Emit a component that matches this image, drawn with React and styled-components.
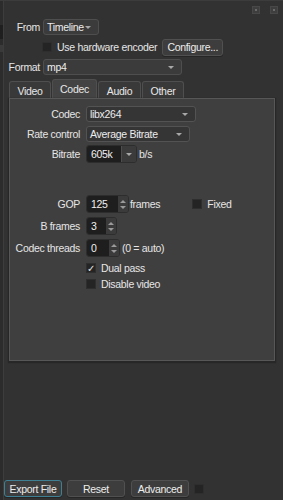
import React from 'react'
import styled, { createGlobalStyle } from 'styled-components'

const Global = createGlobalStyle`
    html, body { margin: 0; padding: 0; background: #323232; }
    body {
        font-family: "Liberation Sans", Arial, sans-serif;
        font-size: 10.5px;
        letter-spacing: -0.3px;
        color: #e6e6e6;
        white-space: nowrap;
    }
`

const Window = styled.div`
    width: 283px;
    height: 500px;
    display: flex;
    background: #323232;
    border-top: 1px solid #3c3c3c;
    box-sizing: border-box;
    overflow: hidden;
`

const SideStrip = styled.div`
    width: 3px;
    flex: none;
    background: #2c2c2c;
    border-right: 1px solid #3d3d3d;
    display: flex;
    flex-direction: column;
    padding-top: 24px;
    gap: 6px;
`

const StripBlock = styled.div`
    height: ${p => p.h}px;
    background: ${p => p.c};
`

const Main = styled.div`
    flex: 1;
    display: flex;
    flex-direction: column;
    position: relative;
`

const WinButtons = styled.div`
    position: absolute;
    top: 5px;
    right: 5px;
    display: flex;
    gap: 10px;
`

const WinButton = styled.div`
    width: 6px;
    height: 6px;
    background: #3e3e3e;
    border: 1px solid #484848;
    display: flex;
    align-items: center;
    justify-content: center;
    &::after {
        content: '';
        width: 2px;
        height: 2px;
        background: #6a6a6a;
    }
`

const Top = styled.div`
    padding: 18px 0 0 0;
    display: flex;
    flex-direction: column;
`

const Row = styled.div`
    display: flex;
    align-items: center;
    height: ${p => p.h || 16}px;
    margin-top: ${p => p.mt || 0}px;
`

const TopLabel = styled.span`
    width: 36px;
    text-align: right;
    margin-right: 3px;
    flex: none;
`

const Combo = styled.div`
    width: ${p => p.w}px;
    height: ${p => p.h || 16}px;
    box-sizing: border-box;
    background: ${p => p.inner ? '#353535' : '#3b3b3b'};
    border: 1px solid ${p => p.inner ? '#535353' : '#4e4e4e'};
    border-radius: 3px;
    display: flex;
    align-items: center;
    justify-content: space-between;
    padding: 0 7px 0 3px;
    color: #ededed;
    &::after {
        content: '';
        border-left: 3px solid transparent;
        border-right: 3px solid transparent;
        border-top: 3px solid #a8a8a8;
    }
`

const Check = styled.div`
    width: 10px;
    height: 10px;
    box-sizing: border-box;
    background: #242424;
    border: 1px solid #2e2e2e;
    flex: none;
    display: flex;
    align-items: center;
    justify-content: center;
    font-size: 10px;
    color: #e6e6e6;
    margin-right: ${p => p.mr ?? 5}px;
    margin-left: ${p => p.ml || 0}px;
`

const Button = styled.div`
    height: 17px;
    width: ${p => p.w}px;
    box-sizing: border-box;
    background: #3d3d3d;
    border: 1px solid ${p => p.focus ? '#3f7f93' : '#505050'};
    border-radius: 3px;
    display: flex;
    align-items: center;
    justify-content: center;
    color: #ededed;
    margin-left: ${p => p.ml || 0}px;
    box-shadow: 0 1px 0 #262626;
`

const Tabs = styled.div`
    display: flex;
    margin: 4px 0 0 5px;
    height: 19px;
    align-items: flex-end;
    gap: 1px;
`

const Tab = styled.div`
    width: ${p => p.w}px;
    height: ${p => p.active ? 19 : 17}px;
    box-sizing: border-box;
    background: ${p => p.active ? '#434343' : '#393939'};
    border: 1px solid #4f4f4f;
    border-bottom: none;
    border-radius: 3px 3px 0 0;
    display: flex;
    align-items: center;
    justify-content: center;
    color: #e8e8e8;
    padding-top: ${p => p.active ? 0 : 1}px;
`

const Panel = styled.div`
    margin-left: 5px;
    width: 266px;
    height: 263px;
    box-sizing: border-box;
    background: #3f3f3f;
    border: 1px solid #575757;
    box-shadow: 0 1px 1px 1px #272727;
    padding-top: 7px;
    display: flex;
    flex-direction: column;
`

const FormRow = styled.div`
    display: flex;
    align-items: center;
    height: ${p => p.h || 16}px;
    margin-top: ${p => p.mt || 0}px;
`

const FormLabel = styled.span`
    width: 70px;
    text-align: right;
    margin-right: 6px;
    flex: none;
`

const Field = styled.div`
    height: 18px;
    display: flex;
    box-sizing: border-box;
    border-radius: 3px;
    overflow: hidden;
    border: 1px solid #2d2d2d;
`

const FieldText = styled.div`
    width: ${p => p.w}px;
    background: #1e1e1e;
    display: flex;
    align-items: center;
    padding-left: 4px;
    box-sizing: border-box;
    color: #f0f0f0;
`

const DropPart = styled.div`
    width: 14px;
    background: #3b3b3b;
    border-left: 1px solid #4e4e4e;
    display: flex;
    align-items: center;
    justify-content: center;
    &::after {
        content: '';
        border-left: 3px solid transparent;
        border-right: 3px solid transparent;
        border-top: 3px solid #a8a8a8;
    }
`

const SpinPart = styled.div`
    width: 10px;
    background: #3b3b3b;
    display: flex;
    flex-direction: column;
    align-items: center;
    justify-content: center;
    gap: 3px;
`

const Arrow = styled.span`
    border-left: 3px solid transparent;
    border-right: 3px solid transparent;
    ${p => p.up ? 'border-bottom: 3px solid #9a9a9a;' : 'border-top: 3px solid #9a9a9a;'}
`

const Suffix = styled.span`
    margin-left: ${p => p.ml || 2}px;
`

const Spacer = styled.div`
    flex: 1;
`

const Footer = styled.div`
    display: flex;
    align-items: center;
    margin: 0 0 3px 0;
    height: 17px;
`

const Spin = ({ value, w }) => (
    <Field>
        <FieldText w={w}>{value}</FieldText>
        <SpinPart><Arrow up /><Arrow /></SpinPart>
    </Field>
)

const App = () => (
    <Window>
        <Global />
        <SideStrip>
            <StripBlock h={14} c="#1f1f1f" />
            <StripBlock h={7} c="#3a3a3a" />
        </SideStrip>
        <Main>
            <WinButtons>
                <WinButton />
                <WinButton />
            </WinButtons>
            <Top>
                <Row>
                    <TopLabel>From</TopLabel>
                    <Combo w={56}>Timeline</Combo>
                </Row>
                <Row mt={4} h={16}>
                    <Check ml={38} />
                    <span>Use hardware encoder</span>
                    <Button w={61} ml={5}>Configure...</Button>
                </Row>
                <Row mt={4}>
                    <TopLabel>Format</TopLabel>
                    <Combo w={139}>mp4</Combo>
                </Row>
            </Top>
            <Tabs>
                <Tab w={42}>Video</Tab>
                <Tab w={45} active>Codec</Tab>
                <Tab w={43}>Audio</Tab>
                <Tab w={42}>Other</Tab>
            </Tabs>
            <Panel>
                <FormRow>
                    <FormLabel>Codec</FormLabel>
                    <Combo w={110} inner>libx264</Combo>
                </FormRow>
                <FormRow mt={4}>
                    <FormLabel>Rate control</FormLabel>
                    <Combo w={104} inner>Average Bitrate</Combo>
                </FormRow>
                <FormRow mt={3} h={18}>
                    <FormLabel>Bitrate</FormLabel>
                    <Field>
                        <FieldText w={34}>605k</FieldText>
                        <DropPart />
                    </Field>
                    <Suffix ml={2}>b/s</Suffix>
                </FormRow>
                <FormRow mt={32} h={18}>
                    <FormLabel>GOP</FormLabel>
                    <Spin value="125" w={31} />
                    <Suffix ml={1}>frames</Suffix>
                    <Check ml={32} />
                    <span>Fixed</span>
                </FormRow>
                <FormRow mt={4} h={18}>
                    <FormLabel>B frames</FormLabel>
                    <Spin value="3" w={19} />
                </FormRow>
                <FormRow mt={4} h={18}>
                    <FormLabel>Codec threads</FormLabel>
                    <Spin value="0" w={22} />
                    <Suffix ml={2}>(0 = auto)</Suffix>
                </FormRow>
                <FormRow mt={5} h={12}>
                    <Check ml={76}>✓</Check>
                    <span>Dual pass</span>
                </FormRow>
                <FormRow mt={4} h={12}>
                    <Check ml={76} />
                    <span>Disable video</span>
                </FormRow>
            </Panel>
            <Spacer />
            <Footer>
                <Button w={58} focus>Export File</Button>
                <Button w={58} ml={5}>Reset</Button>
                <Button w={58} ml={6}>Advanced</Button>
                <Check ml={5} />
            </Footer>
        </Main>
    </Window>
)

export default App
